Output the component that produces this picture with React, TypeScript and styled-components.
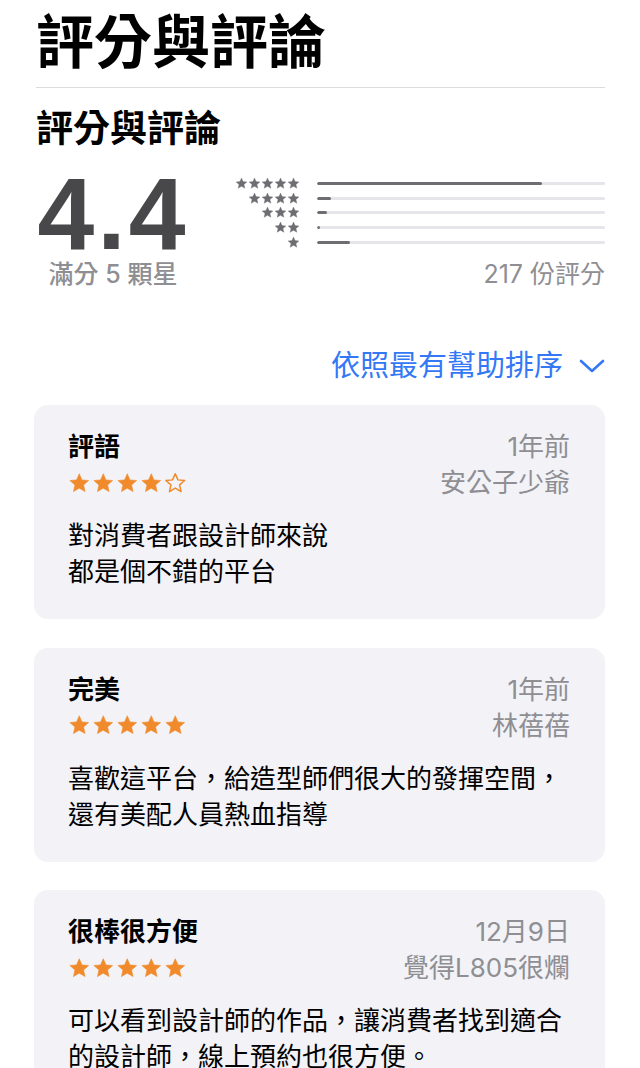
import styled, { createGlobalStyle } from 'styled-components';

const GlobalStyle = createGlobalStyle`
  body {
    margin: 0;
    background: #ffffff;
    font-family: Inter, "Noto Sans CJK TC", sans-serif;
    color: #000000;
  }
`;

const Page = styled.div`
  padding: 0 35px 0 36px;
  overflow: hidden;
  height: 1068px;
`;

const Title = styled.h1`
  margin: 0;
  padding-top: 4px;
  font-size: 58px;
  line-height: 76px;
  font-weight: 700;
`;

const Divider = styled.hr`
  margin: 7px 0 0;
  border: none;
  border-top: 1px solid #dcdcde;
`;

const SubTitle = styled.h2`
  margin: 0;
  padding-top: 16px;
  font-size: 37px;
  line-height: 50px;
  font-weight: 600;
`;

const Summary = styled.div`
  display: flex;
  align-items: flex-start;
  margin-top: 15px;
`;

const ScoreBox = styled.div`
  display: flex;
  flex-direction: column;
  align-items: center;
  width: 154px;
`;

const Score = styled.div`
  font-family: "Liberation Sans", Arial, sans-serif;
  font-size: 102px;
  font-weight: 700;
  line-height: 90px;
  letter-spacing: 3px;
  color: #48484a;
`;

const ScoreNote = styled.div`
  font-size: 25px;
  line-height: 30px;
  color: #8e8e93;
  font-weight: 500;
`;

const Breakdown = styled.div`
  flex: 1;
  display: flex;
  flex-direction: column;
  margin-left: 44px;
  padding-top: 7px;
`;

const BarRow = styled.div`
  display: flex;
  align-items: center;
  height: 14.8px;
`;

const StarCell = styled.div`
  width: 66px;
  display: flex;
  justify-content: flex-end;
`;

const Track = styled.div`
  flex: 1;
  height: 3px;
  margin-left: 17px;
  background: #e5e5ea;
  border-radius: 2px;
  overflow: hidden;
`;

const Fill = styled.div`
  height: 100%;
  background: #6d6d72;
  border-radius: 2px;
`;

const Count = styled.div`
  text-align: right;
  font-size: 25px;
  line-height: 30px;
  color: #8e8e93;
  margin-top: 9px;
`;

const SortRow = styled.div`
  display: flex;
  justify-content: flex-end;
  align-items: center;
  gap: 16px;
  margin-top: 57px;
  color: #3478f6;
  font-size: 29px;
  line-height: 40px;
`;

const Cards = styled.div`
  display: flex;
  flex-direction: column;
  gap: 28.5px;
  margin-top: 19px;
  margin-left: -2px;
`;

const Card = styled.div`
  background: #f2f2f7;
  border-radius: 14px;
  padding: 24px 35px 29px 34px;
`;

const CardHead = styled.div`
  display: grid;
  grid-template-columns: 1fr auto;
  align-items: center;
`;

const ReviewTitle = styled.div`
  font-size: 26px;
  line-height: 36px;
  font-weight: 600;
`;

const Meta = styled.div`
  font-size: 26px;
  line-height: 36px;
  color: #8e8e93;
  text-align: right;
`;

const StarLine = styled.div`
  display: flex;
  gap: 1.5px;
`;

const Body = styled.p`
  margin: 17px 0 0;
  font-size: 26px;
  line-height: 36px;
`;

const StarIcon = ({ size, color, outline }: { size: number; color: string; outline?: boolean }) => (
  <svg width={size} height={size} viewBox="0 0 24 24">
    <polygon
      points="12,1.8 14.9,8.4 22,9.1 16.6,13.8 18.2,20.9 12,17.2 5.8,20.9 7.4,13.8 2,9.1 9.1,8.4"
      fill={outline ? 'none' : color}
      stroke={color}
      strokeWidth={outline ? 1.6 : 0.6}
      strokeLinejoin="round"
    />
  </svg>
);

const Chevron = () => (
  <svg width="26" height="16" viewBox="0 0 26 16">
    <polyline points="2,3 13,13 24,3" fill="none" stroke="#3478f6" strokeWidth="2.6" strokeLinecap="round" strokeLinejoin="round" />
  </svg>
);

const bars = [
  { stars: 5, pct: 78 },
  { stars: 4, pct: 5 },
  { stars: 3, pct: 3.5 },
  { stars: 2, pct: 1 },
  { stars: 1, pct: 11.5 },
];

const reviews = [
  {
    title: '評語',
    date: '1年前',
    author: '安公子少爺',
    rating: 4,
    lines: ['對消費者跟設計師來說', '都是個不錯的平台'],
  },
  {
    title: '完美',
    date: '1年前',
    author: '林蓓蓓',
    rating: 5,
    lines: ['喜歡這平台，給造型師們很大的發揮空間，', '還有美配人員熱血指導'],
  },
  {
    title: '很棒很方便',
    date: '12月9日',
    author: '覺得L805很爛',
    rating: 5,
    lines: ['可以看到設計師的作品，讓消費者找到適合', '的設計師，線上預約也很方便。'],
  },
];

export default function App() {
  return (
    <>
      <GlobalStyle />
      <Page>
        <Title>評分與評論</Title>
        <Divider />
        <SubTitle>評分與評論</SubTitle>
        <Summary>
          <ScoreBox>
            <Score>4.4</Score>
            <ScoreNote>滿分 5 顆星</ScoreNote>
          </ScoreBox>
          <Breakdown>
            {bars.map((b) => (
              <BarRow key={b.stars}>
                <StarCell>
                  {Array.from({ length: b.stars }).map((_, i) => (
                    <StarIcon key={i} size={13} color="#6d6d72" />
                  ))}
                </StarCell>
                <Track>
                  <Fill style={{ width: `${b.pct}%` }} />
                </Track>
              </BarRow>
            ))}
            <Count>217 份評分</Count>
          </Breakdown>
        </Summary>
        <SortRow>
          <span>依照最有幫助排序</span>
          <Chevron />
        </SortRow>
        <Cards>
          {reviews.map((r) => (
            <Card key={r.title}>
              <CardHead>
                <ReviewTitle>{r.title}</ReviewTitle>
                <Meta>{r.date}</Meta>
                <StarLine>
                  {Array.from({ length: 5 }).map((_, i) => (
                    <StarIcon key={i} size={22.5} color="#f08a2b" outline={i >= r.rating} />
                  ))}
                </StarLine>
                <Meta>{r.author}</Meta>
              </CardHead>
              <Body>
                {r.lines.map((l, i) => (
                  <span key={i}>
                    {l}
                    {i < r.lines.length - 1 && <br />}
                  </span>
                ))}
              </Body>
            </Card>
          ))}
        </Cards>
      </Page>
    </>
  );
}
